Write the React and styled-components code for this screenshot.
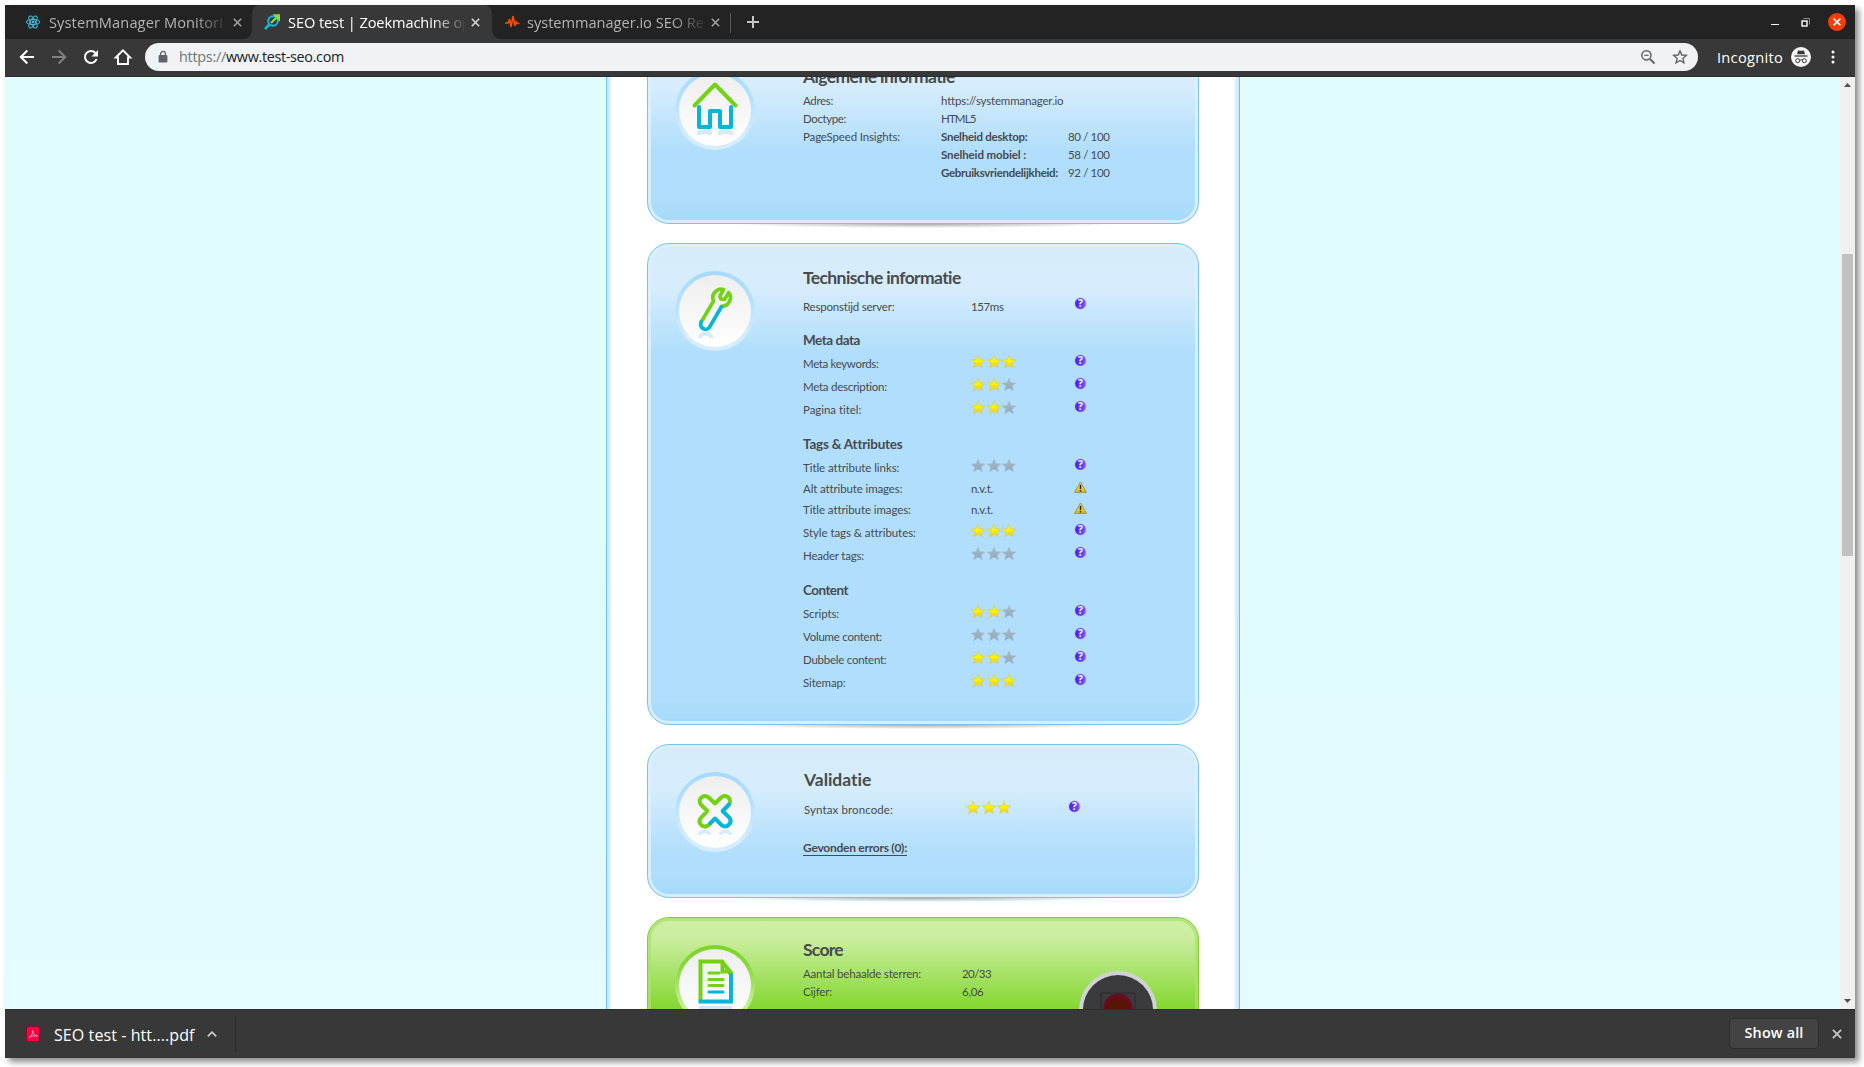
import React, { useLayoutEffect, useRef, useState } from 'react';
import styled, { createGlobalStyle, css } from 'styled-components';

const Global = createGlobalStyle`
  * { box-sizing: border-box; }
  html, body { margin: 0; background: #fff; overflow: hidden; }
`;

/* ---------- text that keeps a given advance width ---------- */
const FitSpan = styled.span`
  display: inline-block;
  justify-self: start;
  white-space: pre;
`;
function Fit({ w, children, className }) {
  const ref = useRef(null);
  const [spacing, setSpacing] = useState(0);
  useLayoutEffect(() => {
    const natural = ref.current.getBoundingClientRect().width;
    setSpacing((w - natural) / String(children).length);
  }, []);
  return <FitSpan ref={ref} className={className} style={{ letterSpacing: spacing }}>{children}</FitSpan>;
}

/* ---------- browser window ---------- */
const Window = styled.div`
  width: 1850px;
  height: 1053px;
  margin: 5px;
  display: flex;
  flex-direction: column;
  box-shadow: 4px 4px 6px rgba(0, 0, 0, 0.45);
  font-family: "Open Sans", "Noto Sans", sans-serif;
  background: #383838;
`;
const TabStrip = styled.div`
  height: 34px;
  flex: none;
  display: flex;
  background: #232323;
`;
const Tab = styled.div`
  width: ${p => p.$w}px;
  padding-left: ${p => p.$pad}px;
  height: 34px;
  display: flex;
  align-items: center;
  position: relative;
  color: ${p => (p.$active ? '#fff' : '#b4b4b4')};
  ${p => p.$active && css`
    background: #383838;
    border-radius: 8px 8px 0 0;
    &::before, &::after {
      content: '';
      position: absolute;
      bottom: 0;
      width: 8px;
      height: 8px;
    }
    &::before { left: -8px; background: radial-gradient(circle at 0 0, transparent 7.5px, #383838 8px); }
    &::after { right: -8px; background: radial-gradient(circle at 100% 0, transparent 7.5px, #383838 8px); }
  `}
`;
const TabTitle = styled.div`
  width: ${p => p.$w}px;
  margin-left: ${p => p.$gap}px;
  overflow: hidden;
  font-size: 14.6px;
  line-height: 22px;
  white-space: nowrap;
  mask-image: linear-gradient(90deg, #000 calc(100% - 32px), rgba(0, 0, 0, 0.12) 100%);
`;
const TabClose = styled.svg`
  width: 9px;
  height: 9px;
  margin-left: ${p => p.$gap}px;
  stroke: ${p => (p.$active ? '#d8d8d8' : '#a0a0a0')};
  stroke-width: 1.6;
  fill: none;
`;
const StripDivider = styled.div`
  width: 1px;
  height: 20px;
  margin: 8px 0 0 5px;
  background: #5d5d5d;
`;
const NewTab = styled.svg`
  width: 12px;
  height: 12px;
  margin: 11px 0 0 16px;
  stroke: #c4c4c4;
  stroke-width: 2;
`;
const WindowButtons = styled.div`
  margin-left: auto;
  padding-right: 9px;
  display: flex;
  align-items: center;
`;
const Minimise = styled.div`
  width: 8px;
  height: 1px;
  margin: 4px 22px 0 0;
  background: #fff;
`;
const Restore = styled.svg`
  width: 9px;
  height: 9px;
  margin-right: 18px;
  fill: none;
`;
const CloseWindow = styled.div`
  width: 18px;
  height: 18px;
  border-radius: 50%;
  background: #f83c07;
  display: flex;
  align-items: center;
  justify-content: center;
`;
const Toolbar = styled.div`
  height: 38px;
  flex: none;
  display: flex;
  align-items: center;
  padding: 0 17px 2px 12px;
  background: #383838;
  border-bottom: 1px solid #2b2b2b;
`;
const NavIcon = styled.svg`
  width: 20px;
  height: 20px;
  margin-right: 12px;
  fill: none;
  stroke: ${p => (p.$dim ? '#818181' : '#fff')};
  stroke-width: 2;
`;
const Omnibox = styled.div`
  width: 1553px;
  height: 28px;
  flex: none;
  border-radius: 14px;
  background: #eff3f5;
  display: flex;
  align-items: center;
  padding: 0 10px 0 13px;
`;
const Url = styled.div`
  margin-left: 11px;
  font-size: 14.4px;
  line-height: 24px;
  color: #202124;
  flex: 1;
  display: flex;
`;
const Scheme = styled.span`
  color: #71757b;
`;
const BoxIcon = styled.svg`
  width: 16px;
  height: 16px;
  margin-left: 16px;
  fill: none;
  stroke: #5f6368;
  stroke-width: 1.5;
`;
const Incognito = styled.div`
  margin-left: 19px;
  width: 74px;
  font-size: 14.6px;
  line-height: 24px;
  color: #fff;
`;
const Dots = styled.svg`
  width: 4px;
  height: 14px;
  margin-left: auto;
  margin-right: 3px;
  fill: #fff;
`;

/* ---------- viewport ---------- */
const Viewport = styled.div`
  height: 932px;
  flex: none;
  display: flex;
  overflow: hidden;
`;
const Page = styled.div`
  width: 1835px;
  height: 932px;
  overflow: hidden;
  background: linear-gradient(180deg, #e0fcfd 0, #e0fcfd 50%, #e4fbff 100%);
`;
const Column = styled.div`
  width: 634px;
  height: 932px;
  margin-left: 601px;
  padding: 0 36px;
  background: linear-gradient(90deg, #c8e7fb 0, #d9effd 3px, #fff 5px, #fff calc(100% - 5px), #d9effd calc(100% - 3px), #c8e7fb 100%);
  border: solid #6fc1ef;
  border-width: 0 1px;
  font-family: Lato, "Open Sans", sans-serif;
  color: #484b4d;
  overflow: hidden;
`;
const Stack = styled.div`
  margin: -35px 4px 0;
  width: 552px;
  display: flex;
  flex-direction: column;
  gap: 19px;
`;
const blue = css`
  border: 1px solid #77c4f0;
  background: linear-gradient(180deg, #d5ecfb 0, #d7edfd 42px, #c3e5fc 76px, #b0defc 109px, #b0defc calc(100% - 24px), #a4d9fb 100%);
  box-shadow: inset 0 0 0 3px rgba(219, 240, 253, 0.9);
`;
const green = css`
  border: 1px solid #7ed026;
  background: linear-gradient(180deg, #cff0a8 0, #c9ed9d 22px, #83d72f 91px, #7ed528 100%);
  box-shadow: inset 0 0 0 3px rgba(170, 226, 110, 0.75);
`;
const Card = styled.section`
  height: ${p => p.$h}px;
  width: 552px;
  flex: none;
  border-radius: 22px;
  position: relative;
  display: flex;
  padding-left: 27px;
  ${p => (p.$green ? green : blue)}
  &::after {
    content: '';
    position: absolute;
    left: 80px;
    right: 80px;
    top: calc(100% + 1px);
    height: 4px;
    background: radial-gradient(ellipse 50% 100% at 50% 0, rgba(60, 60, 60, 0.42), rgba(120, 120, 120, 0));
  }
`;
const Medallion = styled.div`
  width: 80px;
  height: 80px;
  flex: none;
  margin: 27px 48px 0 0;
  border-radius: 50%;
  padding: 4px;
  background: ${p => (p.$green
    ? 'linear-gradient(180deg, #7dd526 0, #86d83a 25%, #c7ee9b 75%)'
    : 'linear-gradient(180deg, #a5dafb 0, #b4e0fc 35%, #d6edfc 85%)')};
`;
const Disc = styled.div`
  width: 72px;
  height: 72px;
  border-radius: 50%;
  background: linear-gradient(180deg, #eeeeef, #fff);
  display: flex;
  align-items: center;
  justify-content: center;
`;
const Glyph = styled.svg`
  width: 72px;
  height: 72px;
  fill: none;
  stroke-width: 4;
  stroke-linecap: round;
  stroke-linejoin: round;
`;
const Body = styled.div`
  padding: ${p => p.$top}px 0 0 ${p => p.$left || 0}px;
`;
const Heading = styled.h2`
  margin: 0 0 ${p => p.$gap}px;
  font-size: 17.5px;
  font-weight: 700;
  line-height: 24px;
  height: 24px;
`;
const SubHeading = styled.h3`
  margin: 0;
  padding-top: ${p => p.$pad}px;
  height: ${p => p.$pad + 24}px;
  font-size: 13.5px;
  font-weight: 700;
  line-height: 24px;
`;
const Row = styled.div`
  display: grid;
  grid-template-columns: ${p => p.$cols};
  height: ${p => p.$h}px;
  line-height: ${p => p.$lh || p.$h}px;
  font-size: 11.5px;
  align-items: start;
`;
const Strong = styled.b`
  font-weight: 700;
`;
const Stars = styled.div`
  display: flex;
  gap: 1.7px;
  padding-top: 2.5px;
`;
const StarSvg = styled.svg`
  width: 14px;
  height: 13px;
  display: block;
`;
const HelpSvg = styled.svg`
  width: 13px;
  height: 13px;
  margin-top: 2px;
  display: block;
`;
const HelpText = styled.text`
  font: 700 10px "Open Sans", sans-serif;
  fill: #fff;
`;
const Errors = styled.div`
  margin: 15px 0 0 -1px;
  font-size: 12px;
  font-weight: 700;
  line-height: 23px;
`;
const Underlined = styled(Fit)`
  line-height: 14px;
  border-bottom: 1px solid #484b4d;
`;
const Lamp = styled.svg`
  position: absolute;
  left: 431px;
  top: 53px;
  width: 78px;
  height: 78px;
`;

const Scrollbar = styled.div`
  width: 15px;
  height: 932px;
  background: #f0f0f0;
  display: flex;
  flex-direction: column;
  align-items: center;
`;
const Arrow = styled.svg`
  width: 7px;
  height: 4px;
  margin: ${p => p.$m};
  fill: #505050;
`;
const Thumb = styled.div`
  width: 11px;
  height: 302px;
  background: #c1c1c1;
`;

/* ---------- download shelf ---------- */
const Shelf = styled.div`
  flex: 1;
  display: flex;
  align-items: center;
  background: #383838;
  border-top: 1px solid #2d2d2d;
  padding: 0 13px 0 21px;
`;
const FileName = styled.div`
  margin: 2px 0 0 14px;
  width: 144px;
  font-size: 16px;
  color: #fff;
  line-height: 24px;
`;
const Caret = styled.svg`
  width: 10px;
  height: 6px;
  margin-left: 9px;
  fill: none;
  stroke: #c8c8c8;
  stroke-width: 1.8;
`;
const ShelfDivider = styled.div`
  width: 1px;
  height: 36px;
  margin-left: 18px;
  background: #2b2b2b;
`;
const ShowAll = styled.button`
  margin: 0 0 1px auto;
  width: 90px;
  height: 31px;
  padding: 0 0 2px;
  border: 1px solid #2d2d2d;
  border-radius: 4px;
  background: #434343;
  color: #fff;
  font: 600 14.4px "Open Sans", sans-serif;
`;
const ShelfClose = styled.svg`
  width: 10px;
  height: 10px;
  margin: 0 0 1px 13px;
  fill: none;
  stroke: #c8c8c8;
  stroke-width: 1.6;
`;
const Favicon = styled.svg`
  width: 16px;
  height: 16px;
  flex: none;
  display: block;
`;
const PdfIcon = styled.svg`
  width: 14px;
  height: 16px;
  flex: none;
`;

/* ---------- small drawings ---------- */
const STAR = 'M7 .4 8.9 4.8 13.7 5.1 10 8.1 11.3 12.6 7 10.1 2.7 12.6 4 8.1 .3 5.1 5.1 4.8Z';
const Star = ({ on }) => (
  <StarSvg viewBox="0 0 14 13">
    <path d={STAR} fill={on ? 'url(#starOn)' : 'url(#starOff)'} stroke={on ? '#d9c83a' : '#a3b7c6'} strokeWidth=".6" />
  </StarSvg>
);
const Rating = ({ n }) => <Stars>{[0, 1, 2].map(i => <Star key={i} on={i < n} />)}</Stars>;
const Help = () => (
  <HelpSvg viewBox="0 0 13 13">
    <circle cx="6.5" cy="6.6" r="6.1" fill="#c3bddd" />
    <circle cx="6.4" cy="6.4" r="5.3" fill="url(#helpFill)" />
    <HelpText x="3.9" y="10">?</HelpText>
  </HelpSvg>
);
const Warning = () => (
  <HelpSvg viewBox="0 0 13 13">
    <path d="M6.5.9 12.5 11.4H.5Z" fill="url(#warnFill)" stroke="#8e8d6c" strokeWidth=".9" strokeLinejoin="round" />
    <path d="M6.5 3.8V8M6.5 9v1.4" stroke="#222" strokeWidth="1.5" />
  </HelpSvg>
);
const Defs = () => (
  <defs>
    <linearGradient id="starOn" x1="0" y1="0" x2="0" y2="1">
      <stop offset="0" stopColor="#f6f31a" /><stop offset=".55" stopColor="#fbf305" /><stop offset=".62" stopColor="#fbdf0c" /><stop offset="1" stopColor="#f8d80a" />
    </linearGradient>
    <linearGradient id="starOff" x1="0" y1="0" x2="0" y2="1">
      <stop offset="0" stopColor="#a5b9c6" /><stop offset="1" stopColor="#93a9b8" />
    </linearGradient>
    <linearGradient id="helpFill" x1="0" y1="0" x2="1" y2="0">
      <stop offset="0" stopColor="#4a25e6" /><stop offset=".5" stopColor="#5a35ee" /><stop offset="1" stopColor="#7d5cf8" />
    </linearGradient>
    <linearGradient id="warnFill" x1="0" y1="0" x2="0" y2="1">
      <stop offset="0" stopColor="#f4ee58" /><stop offset=".6" stopColor="#f0d020" /><stop offset="1" stopColor="#dfae14" />
    </linearGradient>
  </defs>
);
const G = '#74d216';
const B = '#06b6d8';
const HouseGlyph = () => (
  <Glyph viewBox="0 0 72 72">
    <path d="M15.5 31.5 36 10.500 56.500 31.500" stroke={G} />
    <path d="M20 33v20h11V37h10v16h11V33" stroke={B} />
    <path d="M20 61v-3h11v3M41 61v-3h11v3" stroke="#d3ebfb" strokeLinecap="butt" />
  </Glyph>
);
const WrenchGlyph = () => (
  <Glyph viewBox="0 0 72 72">
    <path d="M22.2 47 34.5 26.3c-1.5-4-.4-8 2.6-10.3 2.2-1.8 5.2-2.2 7.4-1.5l-3.6 6.9 1 2.6 3.6.4 4.2-6.9c1.8 2.4 2.3 5.7 1 8.600-1.500 3.500-4.600 5.300-8.200 5.200" stroke={G} strokeWidth="3.7" />
    <path d="M42.3 32 30.5 52.300c-2.900 4.600-10.800.8-8.300-5.300" stroke={B} strokeWidth="3.7" />
    <path d="M21 63c0-6 11-6 11.5 0" stroke="#d3ebfb" strokeLinecap="butt" />
  </Glyph>
);
const CrossGlyph = () => (
  <Glyph viewBox="0 0 72 72">
    <path d="M50 28.500c3.800-5.200-2.800-11.200-7.600-7.200L36 27.500 29.400 21.300c-4.800-4-11.400 2-7.600 7.200L28.400 35l-6.600 7c-3.800 5 2.200 11 7.400 7.400l2-2" stroke={G} />
    <path d="M50 28.500 43.600 35l6.800 6.700c3.600 5.200-2.600 11.200-7.800 7.500L36 42.500 31.200 47.400" stroke={B} />
    <path d="M20 58.500c2-4 9-4 11 0M41 58.500c2-4 9-4 11 0" stroke="#d3ebfb" strokeWidth="3" strokeLinecap="butt" />
  </Glyph>
);
const DocGlyph = () => (
  <Glyph viewBox="0 0 72 72">
    <path d="M21.5 51V12.5H43L51 22.5H43.5V13M51 22.5v3" stroke={G} strokeLinecap="butt" strokeLinejoin="miter" />
    <path d="M30 24h10M30 30.5h14M30 36.5h14" stroke={G} strokeWidth="3.2" />
    <path d="M30 43h14" stroke={B} strokeWidth="3.2" />
    <path d="M52 24.5V52.5H19.5" stroke={B} strokeLinecap="butt" strokeLinejoin="miter" />
    <path d="M20 59h33" stroke="#cfe8fa" strokeLinecap="butt" />
  </Glyph>
);

const HELP_ROW = '168px 103px 14px';
const technical = [
  { title: 'Meta data', w: 57, pad: 10, rows: [['Meta keywords:', 75.5, 3], ['Meta description:', 84, 2], ['Pagina titel:', 58.5, 2]] },
  { title: 'Tags & Attributes', w: 99, pad: 11, rows: [
    ['Title attribute links:', 96, 0],
    ['Alt attribute images:', 99, null],
    ['Title attribute images:', 107.5, null],
    ['Style tags & attributes:', 112.5, 3],
    ['Header tags:', 61, 0],
  ] },
  { title: 'Content', w: 45, pad: 11, rows: [['Scripts:', 36, 2], ['Volume content:', 79, 0], ['Dubbele content:', 83.5, 2], ['Sitemap:', 42.5, 3]] },
];
const speeds = [
  ['Snelheid desktop:', 86.5, '80 / 100'],
  ['Snelheid mobiel :', 85, '58 / 100'],
  ['Gebruiksvriendelijkheid:', 117, '92 / 100'],
];

const Cross = ({ as: Svg, ...rest }) => (
  <Svg viewBox="0 0 9 9" {...rest}><path d="M.8.8 8.2 8.2M8.2.8.8 8.2" /></Svg>
);

export default function App() {
  return (
    <>
      <Global />
      <Window>
        <TabStrip>
          <Tab $w={247} $pad={20}>
            <Favicon viewBox="0 0 16 16" fill="none" stroke="#4cb7d0" strokeWidth="1">
              <rect width="16" height="16" rx="2" fill="#20262a" stroke="none" />
              <circle cx="8" cy="8" r="1.4" fill="#4cb7d0" stroke="none" />
              <ellipse cx="8" cy="8" rx="6.7" ry="2.6" />
              <ellipse cx="8" cy="8" rx="6.7" ry="2.6" transform="rotate(60 8 8)" />
              <ellipse cx="8" cy="8" rx="6.7" ry="2.6" transform="rotate(120 8 8)" />
            </Favicon>
            <TabTitle $w={177} $gap={8}><Fit w={174}>SystemManager Monitori</Fit></TabTitle>
            <Cross as={TabClose} $gap={7} />
          </Tab>
          <Tab $w={240} $pad={12} $active>
            <Favicon viewBox="0 0 16 16" fill="none">
              <circle cx="9" cy="7" r="4.8" stroke="#10b7d9" strokeWidth="2" />
              <path d="M5.5 10.5 1 15" stroke="#10b7d9" strokeWidth="2.6" />
              <path d="M7 9 12 4" stroke="#8fdc2c" strokeWidth="2.2" />
              <path d="M8.5.3H16V7.8Z" fill="#8fdc2c" />
            </Favicon>
            <TabTitle $w={176} $gap={8}><Fit w={183}>SEO test | Zoekmachine op</Fit></TabTitle>
            <Cross as={TabClose} $gap={7} $active />
          </Tab>
          <Tab $w={233} $pad={12}>
            <Favicon viewBox="0 0 16 16" fill="none" stroke="#fb4a0a" strokeWidth="1.7" strokeLinejoin="round">
              <path d="M1 9h3l1.5-3.5 1.5 7 2-10 2 9 1.3-4 .9 2H15.500" />
            </Favicon>
            <TabTitle $w={176} $gap={7}><Fit w={177}>systemmanager.io SEO Re</Fit></TabTitle>
            <Cross as={TabClose} $gap={7.5} />
          </Tab>
          <StripDivider />
          <NewTab viewBox="0 0 12 12"><path d="M6 0v12M0 6h12" /></NewTab>
          <WindowButtons>
            <Minimise />
            <Restore viewBox="0 0 9 9">
              <rect x="1" y="3" width="5" height="5" stroke="#fff" strokeWidth="1.4" />
              <path d="M2.5.5h6V6.500" stroke="#8d8d8d" />
            </Restore>
            <CloseWindow>
              <svg width="8" height="8" viewBox="0 0 8 8" stroke="#fff" strokeWidth="1.5"><path d="M.6.6 7.4 7.4M7.4.6.6 7.4" /></svg>
            </CloseWindow>
          </WindowButtons>
        </TabStrip>

        <Toolbar>
          <NavIcon viewBox="0 0 20 20"><path d="M17 10H4.5M10.3 3.5 3.8 10l6.5 6.5" /></NavIcon>
          <NavIcon viewBox="0 0 20 20" $dim><path d="M3 10h12.5M9.7 3.5 16.2 10l-6.500 6.500" /></NavIcon>
          <NavIcon viewBox="0 0 20 20"><path d="M15.6 12A6 6 0 1 1 14.500 6" /><path d="M17 3v6.500h-6.500Z" fill="#fff" stroke="none" /></NavIcon>
          <NavIcon viewBox="0 0 20 20"><path d="M2.8 10.5 10 3.3l7.2 7.2H15V17H5v-6.500Z" strokeWidth="1.9" /></NavIcon>
          <Omnibox>
            <svg width="10" height="14" viewBox="0 0 10 14"><rect x=".6" y="5" width="8.8" height="7.5" rx="1" fill="#5f6368" /><path d="M2.6 5.5V3.8a2.4 2.4 0 0 1 4.8 0v1.7" fill="none" stroke="#5f6368" strokeWidth="1.3" /></svg>
            <Url><Scheme><Fit w={47}>https://</Fit></Scheme><Fit w={118}>www.test-seo.com</Fit></Url>
            <BoxIcon viewBox="0 0 16 16"><circle cx="6.4" cy="6.3" r="4.6" /><path d="M4.2 6.3h4.4" strokeWidth="1.2" /><path d="M9.8 9.8 14.5 14.5" strokeWidth="1.9" /></BoxIcon>
            <BoxIcon viewBox="0 0 16 16"><path d="M8 1.900 9.800 6l4.500.4-3.400 3 1 4.400L8 11.500l-3.900 2.300 1-4.400-3.400-3L6.200 6Z" strokeWidth="1.4" /></BoxIcon>
          </Omnibox>
          <Incognito><Fit w={66}>Incognito</Fit></Incognito>
          <svg width="20" height="20" viewBox="0 0 20 20" fill="none">
            <circle cx="10" cy="10" r="10" fill="#f5f5f5" />
            <path d="M7 3.600c1-.6 1.800.2 3 .2s2-.8 3-.2l1 3.600H6Z" fill="#383838" />
            <path d="M3.500 9h13" stroke="#383838" strokeWidth="1.3" />
            <circle cx="6.700" cy="13.700" r="2" stroke="#383838" /><circle cx="13.300" cy="13.700" r="2" stroke="#383838" />
            <path d="M8.600 13.200c.8-.5 2-.5 2.800 0" stroke="#383838" />
          </svg>
          <Dots viewBox="0 0 4 14"><circle cx="2" cy="2" r="1.5" /><circle cx="2" cy="7" r="1.5" /><circle cx="2" cy="12" r="1.5" /></Dots>
        </Toolbar>

        <Viewport>
          <Page>
            <Column>
              <Stack>
                <Card $h={182}>
                  <Medallion><Disc><HouseGlyph /></Disc></Medallion>
                  <Body $top={22}>
                    <Heading $gap={3}><Fit w={152}>Algemene informatie</Fit></Heading>
                    <Row $cols="138px 140px" $h={18}><Fit w={30}>Adres:</Fit><Fit w={122}>https://systemmanager.io</Fit></Row>
                    <Row $cols="138px 140px" $h={18}><Fit w={43}>Doctype:</Fit><Fit w={34.5}>HTML5</Fit></Row>
                    {speeds.map(([label, w, value], i) => (
                      <Row key={label} $cols="138px 127px 60px" $h={18}>
                        {i === 0 ? <Fit w={97}>PageSpeed Insights:</Fit> : <span />}
                        <Strong><Fit w={w}>{label}</Fit></Strong>
                        <Fit w={41.5}>{value}</Fit>
                      </Row>
                    ))}
                  </Body>
                </Card>

                <Card $h={482}>
                  <Medallion><Disc><WrenchGlyph /></Disc></Medallion>
                  <Body $top={22}>
                    <Heading $gap={5}><Fit w={158}>Technische informatie</Fit></Heading>
                    <Row $cols={HELP_ROW} $h={23}><Fit w={91.5}>Responstijd server:</Fit><Fit w={32.5}>157ms</Fit><Help /></Row>
                    {technical.map(group => (
                      <React.Fragment key={group.title}>
                        <SubHeading $pad={group.pad}><Fit w={group.w}>{group.title}</Fit></SubHeading>
                        {group.rows.map(([label, w, stars]) => (
                          stars === null
                            ? <Row key={label} $cols={HELP_ROW} $h={21} $lh={19}><Fit w={w}>{label}</Fit><Fit w={22}>n.v.t.</Fit><Warning /></Row>
                            : <Row key={label} $cols={HELP_ROW} $h={23}><Fit w={w}>{label}</Fit><Rating n={stars} /><Help /></Row>
                        ))}
                      </React.Fragment>
                    ))}
                  </Body>
                </Card>

                <Card $h={154}>
                  <Medallion><Disc><CrossGlyph /></Disc></Medallion>
                  <Body $top={23} $left={1}>
                    <Heading $gap={6}><Fit w={67.5}>Validatie</Fit></Heading>
                    <Row $cols="162px 102px 14px" $h={23}><Fit w={89}>Syntax broncode:</Fit><Rating n={3} /><Help /></Row>
                    <Errors><Underlined w={104}>Gevonden errors (0):</Underlined></Errors>
                  </Body>
                </Card>

                <Card $h={200} $green>
                  <Medallion $green><Disc><DocGlyph /></Disc></Medallion>
                  <Body $top={20}>
                    <Heading $gap={3}><Fit w={40}>Score</Fit></Heading>
                    <Row $cols="159px 60px" $h={18}><Fit w={118}>Aantal behaalde sterren:</Fit><Fit w={29}>20/33</Fit></Row>
                    <Row $cols="159px 60px" $h={18}><Fit w={29}>Cijfer:</Fit><Fit w={21.5}>6,06</Fit></Row>
                  </Body>
                  <Lamp viewBox="0 0 78 78">
                    <circle cx="39" cy="39" r="39" fill="#d2d2d4" />
                    <circle cx="39" cy="39" r="35" fill="#3b3b3e" />
                    <path d="M22 78V22h34v56" fill="#3b3b3e" stroke="#2b2b2d" />
                    <circle cx="39" cy="37" r="14.500" fill="#6b0a20" />
                    <circle cx="39" cy="39.500" r="12.500" fill="#571503" />
                  </Lamp>
                </Card>
              </Stack>
            </Column>
          </Page>
          <Scrollbar>
            <Arrow viewBox="0 0 7 4" $m="6px 0 167px"><path d="M0 4 3.5 0 7 4Z" /></Arrow>
            <Thumb />
            <Arrow viewBox="0 0 7 4" $m="auto 0 6px"><path d="M0 0 3.5 4 7 0Z" /></Arrow>
          </Scrollbar>
        </Viewport>

        <Shelf>
          <PdfIcon viewBox="0 0 14 16">
            <rect x=".5" y=".5" width="13" height="15" rx="1.5" fill="#f50545" stroke="#8e0a2c" />
            <path d="M3 11.5c2-.7 4-3.500 3.800-7C6.800 8 9 10 11.500 10 8 9.500 5 10 3 11.500Z" stroke="#ffb0c4" strokeWidth=".8" fill="none" />
          </PdfIcon>
          <FileName><Fit w={140.5}>SEO test - htt....pdf</Fit></FileName>
          <Caret viewBox="0 0 10 6"><path d="M.8 5.3 5 1.2 9.2 5.3" /></Caret>
          <ShelfDivider />
          <ShowAll><Fit w={59}>Show all</Fit></ShowAll>
          <Cross as={ShelfClose} />
        </Shelf>
      </Window>
      <svg width="0" height="0"><Defs /></svg>
    </>
  );
}
